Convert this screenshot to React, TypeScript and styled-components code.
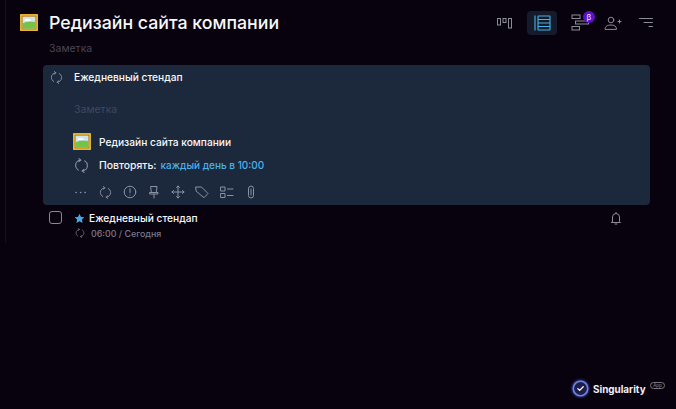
import React from "react";
import styled, { createGlobalStyle } from "styled-components";

const Global = createGlobalStyle`
  html, body { margin: 0; padding: 0; background: #08020f; }
  body { font-family: Inter, "Noto Sans", sans-serif; overflow: hidden; }
  #root { width: 676px; height: 409px; }
`;

const Page = styled.div`
  position: relative;
  width: 676px;
  height: 409px;
  box-sizing: border-box;
  padding-left: 5px;
  background: #08020f;
  overflow: hidden;
`;
const Column = styled.main`
  width: 671px;
  height: 243px;
  box-sizing: border-box;
  border-left: 1px solid #14121f;
  display: flex;
  flex-direction: column;
`;
const Header = styled.header`
  height: 45px;
  box-sizing: border-box;
  padding: 0 21px 0 14px;
  display: flex;
  align-items: center;
  gap: 11px;
`;
const Title = styled.h1`
  margin: 0;
  flex: 1;
  font-size: 17.75px;
  line-height: 24px;
  font-weight: 500;
  color: #f8f7fa;
  white-space: nowrap;
`;
const Tools = styled.nav`
  display: flex;
  align-items: center;
  position: relative;
`;
const ToolBtn = styled.div<{ $active?: boolean; $w: number }>`
  position: relative;
  width: ${(p) => p.$w}px;
  height: 24px;
  border-radius: 4px;
  display: flex;
  align-items: center;
  justify-content: center;
  background: ${(p) => (p.$active ? "#151b2b" : "transparent")};
  color: ${(p) => (p.$active ? "#45b4ea" : "#8d8b96")};
`;
const Beta = styled.span`
  position: absolute;
  top: 0;
  right: -2px;
  width: 12px;
  height: 12px;
  border-radius: 50%;
  background: #5d12c8;
  color: #f3eefd;
  font-size: 8px;
  line-height: 12px;
  text-align: center;
`;
const HeadNote = styled.div`
  height: 20px;
  margin-top: -4px;
  margin-bottom: 4px;
  padding-left: 43px;
  font-size: 10.5px;
  line-height: 16px;
  color: #494654;
`;
const Card = styled.section`
  width: 607px;
  height: 140px;
  margin-left: 37px;
  box-sizing: border-box;
  background: #1c283c;
  border-radius: 4px;
  padding: 5px 0 0 7px;
  display: flex;
  flex-direction: column;
`;
const CardRow = styled.div<{ $h: number; $gap: number }>`
  height: ${(p) => p.$h}px;
  display: flex;
  align-items: center;
  gap: ${(p) => p.$gap}px;
`;
const IconSlot = styled.span<{ $w: number; $c?: string }>`
  width: ${(p) => p.$w}px;
  display: inline-flex;
  justify-content: center;
  align-items: center;
  color: ${(p) => p.$c ?? "#8a93a3"};
  flex: none;
`;
const TaskName = styled.span`
  font-size: 10.2px;
  font-weight: 500;
  color: #f8f9fb;
  white-space: nowrap;
`;
const CardNote = styled.div`
  height: 23px;
  margin-top: 16px;
  padding-left: 24px;
  font-size: 10.5px;
  line-height: 20px;
  color: #3e4a5e;
`;
const ProjectRow = styled.div`
  height: 20px;
  margin-top: 9px;
  padding-left: 23px;
  display: flex;
  align-items: center;
  gap: 8px;
`;
const RepeatRow = styled.div`
  height: 20px;
  margin-top: 3px;
  padding-left: 23px;
  display: flex;
  align-items: center;
`;
const RepeatLabel = styled.span`
  margin-left: 9px;
  font-size: 10.4px;
  font-weight: 500;
  color: #f4f5f8;
`;
const RepeatValue = styled.span`
  margin-left: 4px;
  font-size: 10px;
  font-weight: 500;
  color: #4bb2e8;
`;
const ActionBar = styled.div`
  margin-top: 7px;
  padding-left: 23px;
  height: 20px;
  display: flex;
  align-items: center;
  gap: 8.3px;
  color: #8490a2;
`;
const TaskRow = styled.article`
  position: relative;
  display: flex;
  padding: 6px 0 0 43px;
  gap: 11px;
`;
const Check = styled.span`
  width: 11px;
  height: 11px;
  border: 1.3px solid #8a8894;
  border-radius: 3px;
  flex: none;
`;
const TaskBody = styled.div`
  display: flex;
  flex-direction: column;
  margin: -1px 0 0 1px;
`;
const TaskTitleLine = styled.div`
  display: flex;
  align-items: center;
  gap: 4px;
  height: 16px;
`;
const TaskMeta = styled.div`
  display: flex;
  align-items: center;
  height: 14px;
  gap: 6px;
  font-size: 8.9px;
  font-weight: 500;
  color: #7b7986;
`;
const Bell = styled.span`
  position: absolute;
  left: 603px;
  top: 6px;
  color: #8d8b96;
  display: flex;
`;
const Brand = styled.footer`
  position: absolute;
  left: 572px;
  top: 380px;
  display: flex;
  align-items: center;
  gap: 4px;
`;
const BrandMark = styled.svg`
  filter: drop-shadow(0 0 1.5px #5a6ae6);
`;
const BrandName = styled.span`
  font-size: 9.9px;
  font-weight: 700;
  color: #f2f0f5;
`;
const AppPill = styled.span`
  margin: -6px 0 0 0;
  border: 0.7px solid #77757f;
  border-radius: 4px;
  font-size: 4.5px;
  line-height: 5px;
  padding: 0 2.5px;
  color: #8f8d97;
`;

const Picture = ({ size }: { size: number }) => (
  <svg width={size} height={size * 0.95} viewBox="0 0 18 17">
    <rect x="0" y="0" width="18" height="17" rx="0.8" fill="#b9790f" />
    <rect x="0.9" y="0.9" width="16.2" height="15.2" fill="none" stroke="#efc23f" strokeWidth="1.4" />
    <rect x="2.6" y="2.6" width="12.8" height="11.8" fill="#cfe5ee" />
    <path d="M2.6 9.5 Q7 6.2 15.4 8 V14.4 H2.6 Z" fill="#76c24a" />
    <path d="M4.5 6.2 q1-1.6 2.6-1 q2-.8 3 .6 l1.4 1.2 H5z" fill="#fff" />
  </svg>
);
const Repeat = ({ size = 13 }: { size?: number }) => (
  <svg width={size} height={size} viewBox="0 0 14 14" fill="none" stroke="currentColor" strokeWidth="1" strokeLinecap="round" strokeLinejoin="round">
    <path d="M6.3 2 C3.4 2.1 1.5 4.3 1.5 7 C1.5 8.9 2.5 10.4 4 11.3" />
    <path d="M4.6 .6 L6.3 2 L4.6 3.4" />
    <path d="M7.7 12 C10.6 11.9 12.5 9.7 12.5 7 C12.5 5.1 11.5 3.6 10 2.7" />
    <path d="M9.4 13.4 L7.7 12 L9.4 10.6" />
  </svg>
);
const I = ({ children, w = 14, sw = 1 }: { children: React.ReactNode; w?: number; sw?: number }) => (
  <svg width={w} height={w} viewBox="0 0 14 14" fill="none" stroke="currentColor" strokeWidth={sw} strokeLinecap="round" strokeLinejoin="round">
    {children}
  </svg>
);

export default function App() {
  return (
    <Page>
      <Global />
      <Column>
        <Header>
          <Picture size={18} />
          <Title>Редизайн сайта компании</Title>
          <Tools>
            <ToolBtn $w={30}>
              <svg width="15" height="12" viewBox="0 0 15 12" fill="none" stroke="currentColor" strokeWidth="1">
                <rect x=".5" y="1.5" width="3" height="6.5" />
                <rect x="6" y="1.5" width="3" height="4" />
                <rect x="11.5" y="1.5" width="3" height="9.5" />
              </svg>
            </ToolBtn>
            <ToolBtn $w={8} />
            <ToolBtn $w={30} $active>
              <svg width="17" height="16" viewBox="0 0 17 16" fill="none" stroke="currentColor" strokeWidth="1.1">
                <path d="M1 .5V15.5" />
                <rect x="4" y="1" width="12" height="14" rx=".5" />
                <path d="M4 4.5H16M4 8H16M4 11.5H16" />
              </svg>
            </ToolBtn>
            <ToolBtn $w={10} />
            <ToolBtn $w={26}>
              <svg width="19" height="17" viewBox="0 0 19 17" fill="none" stroke="currentColor" strokeWidth="1">
                <rect x="1" y="1" width="8" height="3.5" />
                <rect x="4.5" y="7" width="13" height="3" />
                <rect x="1" y="12.5" width="7.5" height="3.5" />
              </svg>
              <Beta>β</Beta>
            </ToolBtn>
            <ToolBtn $w={10} />
            <ToolBtn $w={20}>
              <svg width="18" height="14" viewBox="0 0 18 14" fill="none" stroke="currentColor" strokeWidth="1" strokeLinecap="round">
                <circle cx="7" cy="4" r="2.8" />
                <path d="M1 13 C1 10 4 9 7 9 S12.5 10 12.5 13 Z" />
                <path d="M15.5 4V7M14 5.5H17" />
              </svg>
            </ToolBtn>
            <ToolBtn $w={14} />
            <ToolBtn $w={18}>
              <svg width="14" height="12" viewBox="0 0 14 12" fill="none" stroke="currentColor" strokeWidth="1" strokeLinecap="round">
                <path d="M.5 1.5H13.5M5 5.5H13.5M10 9.5H13.5" />
              </svg>
            </ToolBtn>
          </Tools>
        </Header>
        <HeadNote>Заметка</HeadNote>
        <Card>
          <CardRow $h={14} $gap={11}>
            <IconSlot $w={13}><Repeat size={13} /></IconSlot>
            <TaskName>Ежедневный стендап</TaskName>
          </CardRow>
          <CardNote>Заметка</CardNote>
          <ProjectRow>
            <Picture size={18} />
            <TaskName>Редизайн сайта компании</TaskName>
          </ProjectRow>
          <RepeatRow>
            <IconSlot $w={17}><Repeat size={15} /></IconSlot>
            <RepeatLabel>Повторять:</RepeatLabel>
            <RepeatValue>каждый день в 10:00</RepeatValue>
          </RepeatRow>
          <ActionBar>
            <IconSlot $w={16}><I w={14} sw={1.4}><path d="M2 7.5h.3M6.5 7.5h.3M11 7.5h.3" /></I></IconSlot>
            <IconSlot $w={16}><Repeat size={13} /></IconSlot>
            <IconSlot $w={16}><I w={14}><circle cx="7" cy="7" r="5.8" /><path d="M7 3.7V7.7M7 10h.01" /></I></IconSlot>
            <IconSlot $w={16}><I w={14}><path d="M4 1.5H10L9.3 7.5H4.7ZM3 7.5H11V9H3ZM7 9V13" /></I></IconSlot>
            <IconSlot $w={16}><I w={14}><path d="M7 1V13M1 7H13M5.5 2.5L7 1L8.5 2.5M5.5 11.5L7 13L8.5 11.5M2.5 5.5L1 7L2.5 8.5M11.5 5.5L13 7L11.5 8.5" /></I></IconSlot>
            <IconSlot $w={16}><I w={14}><path d="M1 2H6.5L13 8.5L9 12.7L1.5 6.5Z" /></I></IconSlot>
            <IconSlot $w={16}><I w={14}><rect x="1" y="2" width="4" height="4" /><rect x="1" y="8.5" width="4" height="4" /><path d="M7.5 4H13M7.5 10.5H13" /></I></IconSlot>
            <IconSlot $w={16}><I w={14}><path d="M4.5 4V10.5a2.5 2.5 0 0 0 5 0V3.5a2.5 2.5 0 0 0-5 0" /><path d="M7 4V10" /></I></IconSlot>
          </ActionBar>
        </Card>
        <TaskRow>
          <Check />
          <TaskBody>
            <TaskTitleLine>
              <svg width="11" height="11" viewBox="0 0 24 24" fill="#47ace3"><path d="M12 1.5l3.2 7 7.6.8-5.7 5.1 1.6 7.5L12 18l-6.7 3.9 1.6-7.5L1.2 9.3l7.6-.8z" /></svg>
              <TaskName>Ежедневный стендап</TaskName>
            </TaskTitleLine>
            <TaskMeta>
              <IconSlot $w={11} $c="#7b7986"><Repeat size={10} /></IconSlot>
              <span>06:00 / Сегодня</span>
            </TaskMeta>
          </TaskBody>
          <Bell>
            <svg width="14" height="14" viewBox="0 0 14 14" fill="none" stroke="currentColor" strokeWidth="1" strokeLinecap="round" strokeLinejoin="round">
              <path d="M3.5 10.5V6a3.5 3.5 0 0 1 7 0V10.5L11.5 11.5H2.5Z" />
              <path d="M6 13H8M7 1.5V2.5" />
            </svg>
          </Bell>
        </TaskRow>
      </Column>
      <Brand>
        <BrandMark width="17" height="17" viewBox="0 0 17 17" fill="none">
          <circle cx="8.5" cy="8.5" r="7.2" fill="#1b1f4a" stroke="#6e80ea" strokeWidth="1.6" />
          <path d="M5.8 8.6L7.7 10.4L11.2 6.8" stroke="#fff" strokeWidth="1.3" strokeLinecap="round" strokeLinejoin="round" />
        </BrandMark>
        <BrandName>Singularity</BrandName>
        <AppPill>App</AppPill>
      </Brand>
    </Page>
  );
}
